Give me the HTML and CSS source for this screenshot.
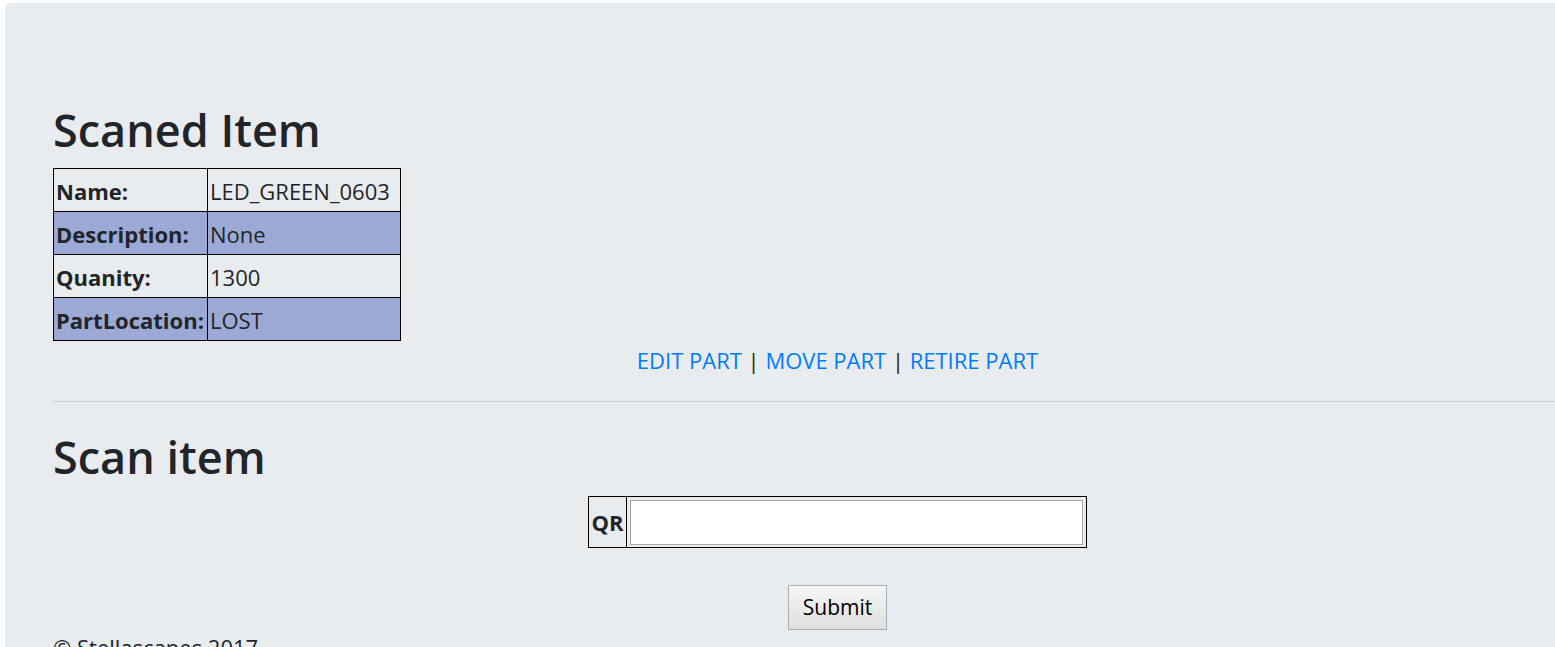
FILE: index.html
```html
<!DOCTYPE html>
<html lang="en">
<head>
  <meta charset="UTF-8"/>
  <title>Scaned Item</title>
  <link rel="stylesheet" href="styles.css">
</head>
<body>

<div class="jumbotron">
  <h1>Scaned Item</h1>

  <table class="part">
    <tr><th>Name:</th><td>LED_GREEN_0603</td></tr>
    <tr><th>Description:</th><td>None</td></tr>
    <tr><th>Quanity:</th><td>1300</td></tr>
    <tr><th>PartLocation:</th><td>LOST</td></tr>
  </table>

  <p class="part-actions">
    <a href="#">EDIT PART</a> | <a href="#">MOVE PART</a> | <a href="#">RETIRE PART</a>
  </p>

  <hr>

  <h1>Scan item</h1>

  <form class="scan-form" action="#" method="post">
    <table class="scan">
      <tr>
        <th><label for="qr">QR</label></th>
        <td><input type="text" id="qr" name="qr"></td>
      </tr>
    </table>
    <button type="submit">Submit</button>
  </form>

  <footer>&copy; Stellascapes 2017</footer>
</div>

</body>
</html>
```

FILE: styles.css
```css
* { box-sizing: border-box; }
html, body { overflow: hidden; }
body {
  font-family: 'Open Sans', sans-serif;
  font-size: 22px; line-height: 1.5;
  color: #212529; background: #fff;
  margin: 0; padding: 3px 0 0 5px;
}
.jumbotron {
  width: 1665px; min-height: 700px;
  background: #e9ecef; border-radius: 6px;
  padding: 99px 48px 0;
}
h1 {
  font-size: 45px; font-weight: 600; line-height: 56px;
  margin: 0 0 10px;
}
a { color: #007bff; text-decoration: none; }

/* part details */
.part { border-collapse: collapse; border: 1px solid #000; }
.part th, .part td {
  border: 1px solid #000; padding: 2px 2px 0; line-height: 40px;
  text-align: left; white-space: nowrap;
}
.part th { width: 154px; }
.part td { width: 193px; }
.part tr:nth-child(even) { background: #9ba9d4; }

.part-actions { text-align: center; line-height: 33px; margin: 3px 0 24px; }

hr { border: 0; border-top: 1px solid rgba(0,0,0,0.1); margin: 0 0 27px; }

/* scan form */
.scan-form { text-align: center; }
.scan { border-collapse: collapse; border: 1px solid #000; margin: 11px auto 0; }
.scan th, .scan td { border: 1px solid #000; }
.scan th { padding: 0 2px; width: 38px; }
.scan td { padding: 3px 3px 2px; }
.scan input {
  display: block; width: 453px; height: 45px;
  border: 1px solid #a9a9a9; background: #fff;
  font: inherit; padding: 0 4px;
}
button {
  margin-top: 37px; width: 99px; height: 45px;
  font: inherit; font-size: 21px; color: #000;
  border: 1px solid #adadad; border-radius: 0;
  background: linear-gradient(#f6f6f6, #dfdfdf);
}
footer { margin-top: 1px; line-height: 33px; }
```
